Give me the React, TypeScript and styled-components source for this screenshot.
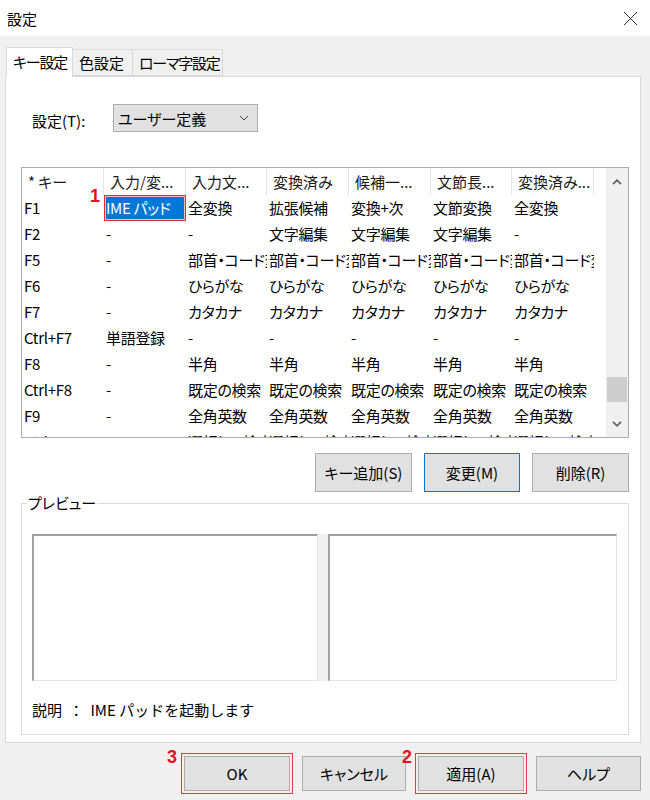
import React from "react";
import styled, { createGlobalStyle } from "styled-components";

const GlobalStyle = createGlobalStyle`
  html, body {
    margin: 0;
    padding: 0;
    background: #f0f0f0;
  }
  body {
    font-family: "Noto Sans CJK JP", "Noto Sans", sans-serif;
    font-size: 15px;
    color: #000;
    font-feature-settings: "palt" 1;
  }
  * { box-sizing: border-box; }
`;

const COLS = "82px 82px 81px 82px 82px 81px 82px";

const headers = ["* キー", "入力/変...", "入力文...", "変換済み", "候補一...", "文節長...", "変換済み..."];

const rows: string[][] = [
  ["F1", "IME パッド", "全変換", "拡張候補", "変換+次", "文節変換", "全変換"],
  ["F2", "-", "-", "文字編集", "文字編集", "文字編集", "-"],
  ["F5", "-", "部首・コード変換", "部首・コード変換", "部首・コード変換", "部首・コード変換", "部首・コード変換"],
  ["F6", "-", "ひらがな", "ひらがな", "ひらがな", "ひらがな", "ひらがな"],
  ["F7", "-", "カタカナ", "カタカナ", "カタカナ", "カタカナ", "カタカナ"],
  ["Ctrl+F7", "単語登録", "-", "-", "-", "-", "-"],
  ["F8", "-", "半角", "半角", "半角", "半角", "半角"],
  ["Ctrl+F8", "-", "既定の検索", "既定の検索", "既定の検索", "既定の検索", "既定の検索"],
  ["F9", "-", "全角英数", "全角英数", "全角英数", "全角英数", "全角英数"],
  ["Ctrl+F9", "-", "選択して検索", "選択して検索", "選択して検索", "選択して検索", "選択して検索"],
];

const Window = styled.div`
  width: 650px;
  height: 800px;
  display: flex;
  flex-direction: column;
  background: #f0f0f0;
  overflow: hidden;
`;

const TitleBar = styled.div`
  height: 36px;
  background: #fff;
  display: flex;
  align-items: center;
  justify-content: space-between;
  padding: 0 12px 0 7px;
  font-size: 15px;
`;

const CloseBtn = styled.div`
  width: 16px;
  height: 16px;
  display: flex;
  align-items: center;
  justify-content: center;
`;

const Body = styled.div`
  padding: 11px 9px 0 5px;
`;

const TabStrip = styled.div`
  display: flex;
  align-items: flex-end;
  height: 29px;
  padding-left: 1px;
  position: relative;
  z-index: 1;
`;

const Tab = styled.div<{ $active?: boolean; $w: number; $tight?: boolean }>`
  width: ${(p) => p.$w}px;
  height: ${(p) => (p.$active ? 30 : 27)}px;
  margin-bottom: ${(p) => (p.$active ? -1 : 0)}px;
  background: ${(p) => (p.$active ? "#fff" : "#f0f0f0")};
  border: 1px solid #d9d9d9;
  border-bottom: ${(p) => (p.$active ? "none" : "1px solid #d9d9d9")};
  margin-left: ${(p) => (p.$active ? 0 : -1)}px;
  display: flex;
  align-items: center;
  padding-left: 6px;
  padding-bottom: ${(p) => (p.$active ? 3 : 0)}px;
  font-size: 15px;
  letter-spacing: ${(p) => (p.$tight ? "-1.2px" : "0")};
  white-space: nowrap;
  overflow: hidden;
`;

const Panel = styled.div`
  width: 636px;
  height: 667px;
  background: #fff;
  border: 1px solid #d9d9d9;
  padding: 27px 11px 7px 15px;
  display: flex;
  flex-direction: column;
`;

const SettingRow = styled.div`
  display: flex;
  align-items: center;
  height: 28px;
  padding-left: 11px;
`;

const SettingLabel = styled.div`
  width: 81px;
  padding-top: 4px;
  font-size: 15px;
`;

const Dropdown = styled.div`
  width: 145px;
  height: 28px;
  background: #e1e1e1;
  border: 1px solid #adadad;
  display: flex;
  align-items: center;
  justify-content: space-between;
  padding: 0 8px 0 4px;
  font-size: 15px;
`;

const ListView = styled.div`
  margin-top: 35px;
  height: 271px;
  border: 1px solid #adadad;
  display: flex;
  overflow: hidden;
`;

const ListBody = styled.div`
  flex: 1;
  overflow: hidden;
`;

const HeaderRow = styled.div`
  display: grid;
  grid-template-columns: ${COLS};
  height: 27px;
`;

const HeaderCell = styled.div`
  padding-left: 6px;
  border-right: 1px solid #e5e5e5;
  line-height: 27px;
  white-space: nowrap;
  overflow: hidden;
  color: #1a1a1a;
`;

const Row = styled.div`
  display: grid;
  grid-template-columns: ${COLS};
  height: 26px;
`;

const Cell = styled.div<{ $selected?: boolean }>`
  position: relative;
  padding-left: 2px;
  line-height: 26px;
  white-space: nowrap;
  overflow: ${(p) => (p.$selected ? "visible" : "hidden")};
  background: ${(p) => (p.$selected ? "#0078d7" : "transparent")};
  color: ${(p) => (p.$selected ? "#fff" : "#000")};
  letter-spacing: -0.3px;
  box-shadow: ${(p) =>
    p.$selected ? "inset 0 0 0 1px #ee2a35, inset 0 0 0 2px #f6b9bf" : "none"};
`;

const Marker = styled.span<{ $left: number; $top: number }>`
  position: absolute;
  left: ${(p) => p.$left}px;
  top: ${(p) => p.$top}px;
  font-family: "Liberation Sans", Arial, sans-serif;
  font-weight: bold;
  font-size: 18px;
  line-height: 18px;
  letter-spacing: 0;
  color: #e8101e;
  pointer-events: none;
`;

const ScrollBar = styled.div`
  width: 22px;
  background: #f0f0f0;
  display: flex;
  flex-direction: column;
`;

const ArrowBox = styled.div<{ $h: number }>`
  height: ${(p) => p.$h}px;
  display: flex;
  align-items: center;
  justify-content: center;
`;

const Track = styled.div`
  flex: 1;
`;

const Thumb = styled.div<{ $offset: number }>`
  margin: ${(p) => p.$offset}px 1px 0 1px;
  height: 25px;
  background: #cdcdcd;
`;

const ButtonRow = styled.div`
  margin-top: 15px;
  display: flex;
  justify-content: flex-end;
  gap: 12px;
`;

const Button = styled.button<{ $w: number; $h?: number; $focused?: boolean }>`
  width: ${(p) => p.$w}px;
  height: ${(p) => p.$h ?? 39}px;
  background: #e1e1e1;
  border: 1px solid ${(p) => (p.$focused ? "#0078d7" : "#adadad")};
  font-family: inherit;
  font-size: 15px;
  color: #000;
  padding: 0;
  margin: 0;
  font-feature-settings: "palt" 1;
`;

const Group = styled.fieldset`
  margin: 1px 0 0 0;
  padding: 21px 11px 14px 10px;
  border: 1px solid #dcdcdc;
  min-width: 0;
`;

const Legend = styled.legend`
  margin-left: -5px;
  padding: 0 1px;
  line-height: 20px;
  font-size: 15px;
`;

const PreviewRow = styled.div`
  display: grid;
  grid-template-columns: 286px 1fr;
  gap: 10px;
  background: #f0f0f0;
  height: 147px;
`;

const PreviewBox = styled.div`
  background: #fff;
  border-style: solid;
  border-width: 2px 1px 1px 2px;
  border-color: #a0a0a0 #e3e3e3 #e3e3e3 #a0a0a0;
`;

const Description = styled.div`
  margin-top: 19px;
  line-height: 20px;
  font-size: 15px;
  font-feature-settings: normal;
  white-space: pre;
`;

const Footer = styled.div`
  margin-top: 10px;
  display: flex;
  justify-content: flex-end;
  gap: 6px;
  padding-right: 6px;
`;

const Slot = styled.div<{ $marked?: boolean }>`
  position: relative;
  padding: 2px;
  border: 1px solid ${(p) => (p.$marked ? "#f2323c" : "transparent")};
`;

const Chevron = ({ up }: { up?: boolean }) => (
  <svg width="10" height="6" viewBox="0 0 10 6">
    <polyline
      points={up ? "1,5.2 5,1.2 9,5.2" : "1,0.8 5,4.8 9,0.8"}
      fill="none"
      stroke="#606060"
      strokeWidth="1.7"
    />
  </svg>
);

export default function App() {
  return (
    <>
      <GlobalStyle />
      <Window>
        <TitleBar>
          <span>設定</span>
          <CloseBtn>
            <svg width="15" height="15" viewBox="0 0 15 15">
              <path d="M1 1 L14 14 M14 1 L1 14" stroke="#333" strokeWidth="1" />
            </svg>
          </CloseBtn>
        </TitleBar>
        <Body>
          <TabStrip>
            <Tab $active $w={67} $tight>キー設定</Tab>
            <Tab $w={61}>色設定</Tab>
            <Tab $w={91} $tight>ローマ字設定</Tab>
          </TabStrip>
          <Panel>
            <SettingRow>
              <SettingLabel>設定(T):</SettingLabel>
              <Dropdown>
                <span>ユーザー定義</span>
                <svg width="10" height="6" viewBox="0 0 10 6">
                  <polyline points="1,1 5,5 9,1" fill="none" stroke="#444" strokeWidth="1" />
                </svg>
              </Dropdown>
            </SettingRow>

            <ListView>
              <ListBody>
                <HeaderRow>
                  {headers.map((h) => (
                    <HeaderCell key={h}>{h}</HeaderCell>
                  ))}
                </HeaderRow>
                {rows.map((r, ri) => (
                  <Row key={ri}>
                    {r.map((c, ci) => {
                      const selected = ri === 0 && ci === 1;
                      return (
                        <Cell key={ci} $selected={selected}>
                          {c}
                          {selected && <Marker $left={-14} $top={-8}>1</Marker>}
                        </Cell>
                      );
                    })}
                  </Row>
                ))}
              </ListBody>
              <ScrollBar>
                <ArrowBox $h={28}>
                  <Chevron up />
                </ArrowBox>
                <Track>
                  <Thumb $offset={181} />
                </Track>
                <ArrowBox $h={26}>
                  <Chevron />
                </ArrowBox>
              </ScrollBar>
            </ListView>

            <ButtonRow>
              <Button $w={97}>キー追加(S)</Button>
              <Button $w={96} $focused>変更(M)</Button>
              <Button $w={97}>削除(R)</Button>
            </ButtonRow>

            <Group>
              <Legend>プレビュー</Legend>
              <PreviewRow>
                <PreviewBox />
                <PreviewBox />
              </PreviewRow>
              <Description>{"説明  ：  IME パッドを起動します"}</Description>
            </Group>
          </Panel>
        </Body>
        <Footer>
          <Slot $marked>
            <Marker $left={-15} $top={-6}>3</Marker>
            <Button $w={106} $h={35}>OK</Button>
          </Slot>
          <Slot>
            <Button $w={104} $h={35}>キャンセル</Button>
          </Slot>
          <Slot $marked>
            <Marker $left={-14} $top={-6}>2</Marker>
            <Button $w={106} $h={35}>適用(A)</Button>
          </Slot>
          <Slot>
            <Button $w={105} $h={35}>ヘルプ</Button>
          </Slot>
        </Footer>
      </Window>
    </>
  );
}
